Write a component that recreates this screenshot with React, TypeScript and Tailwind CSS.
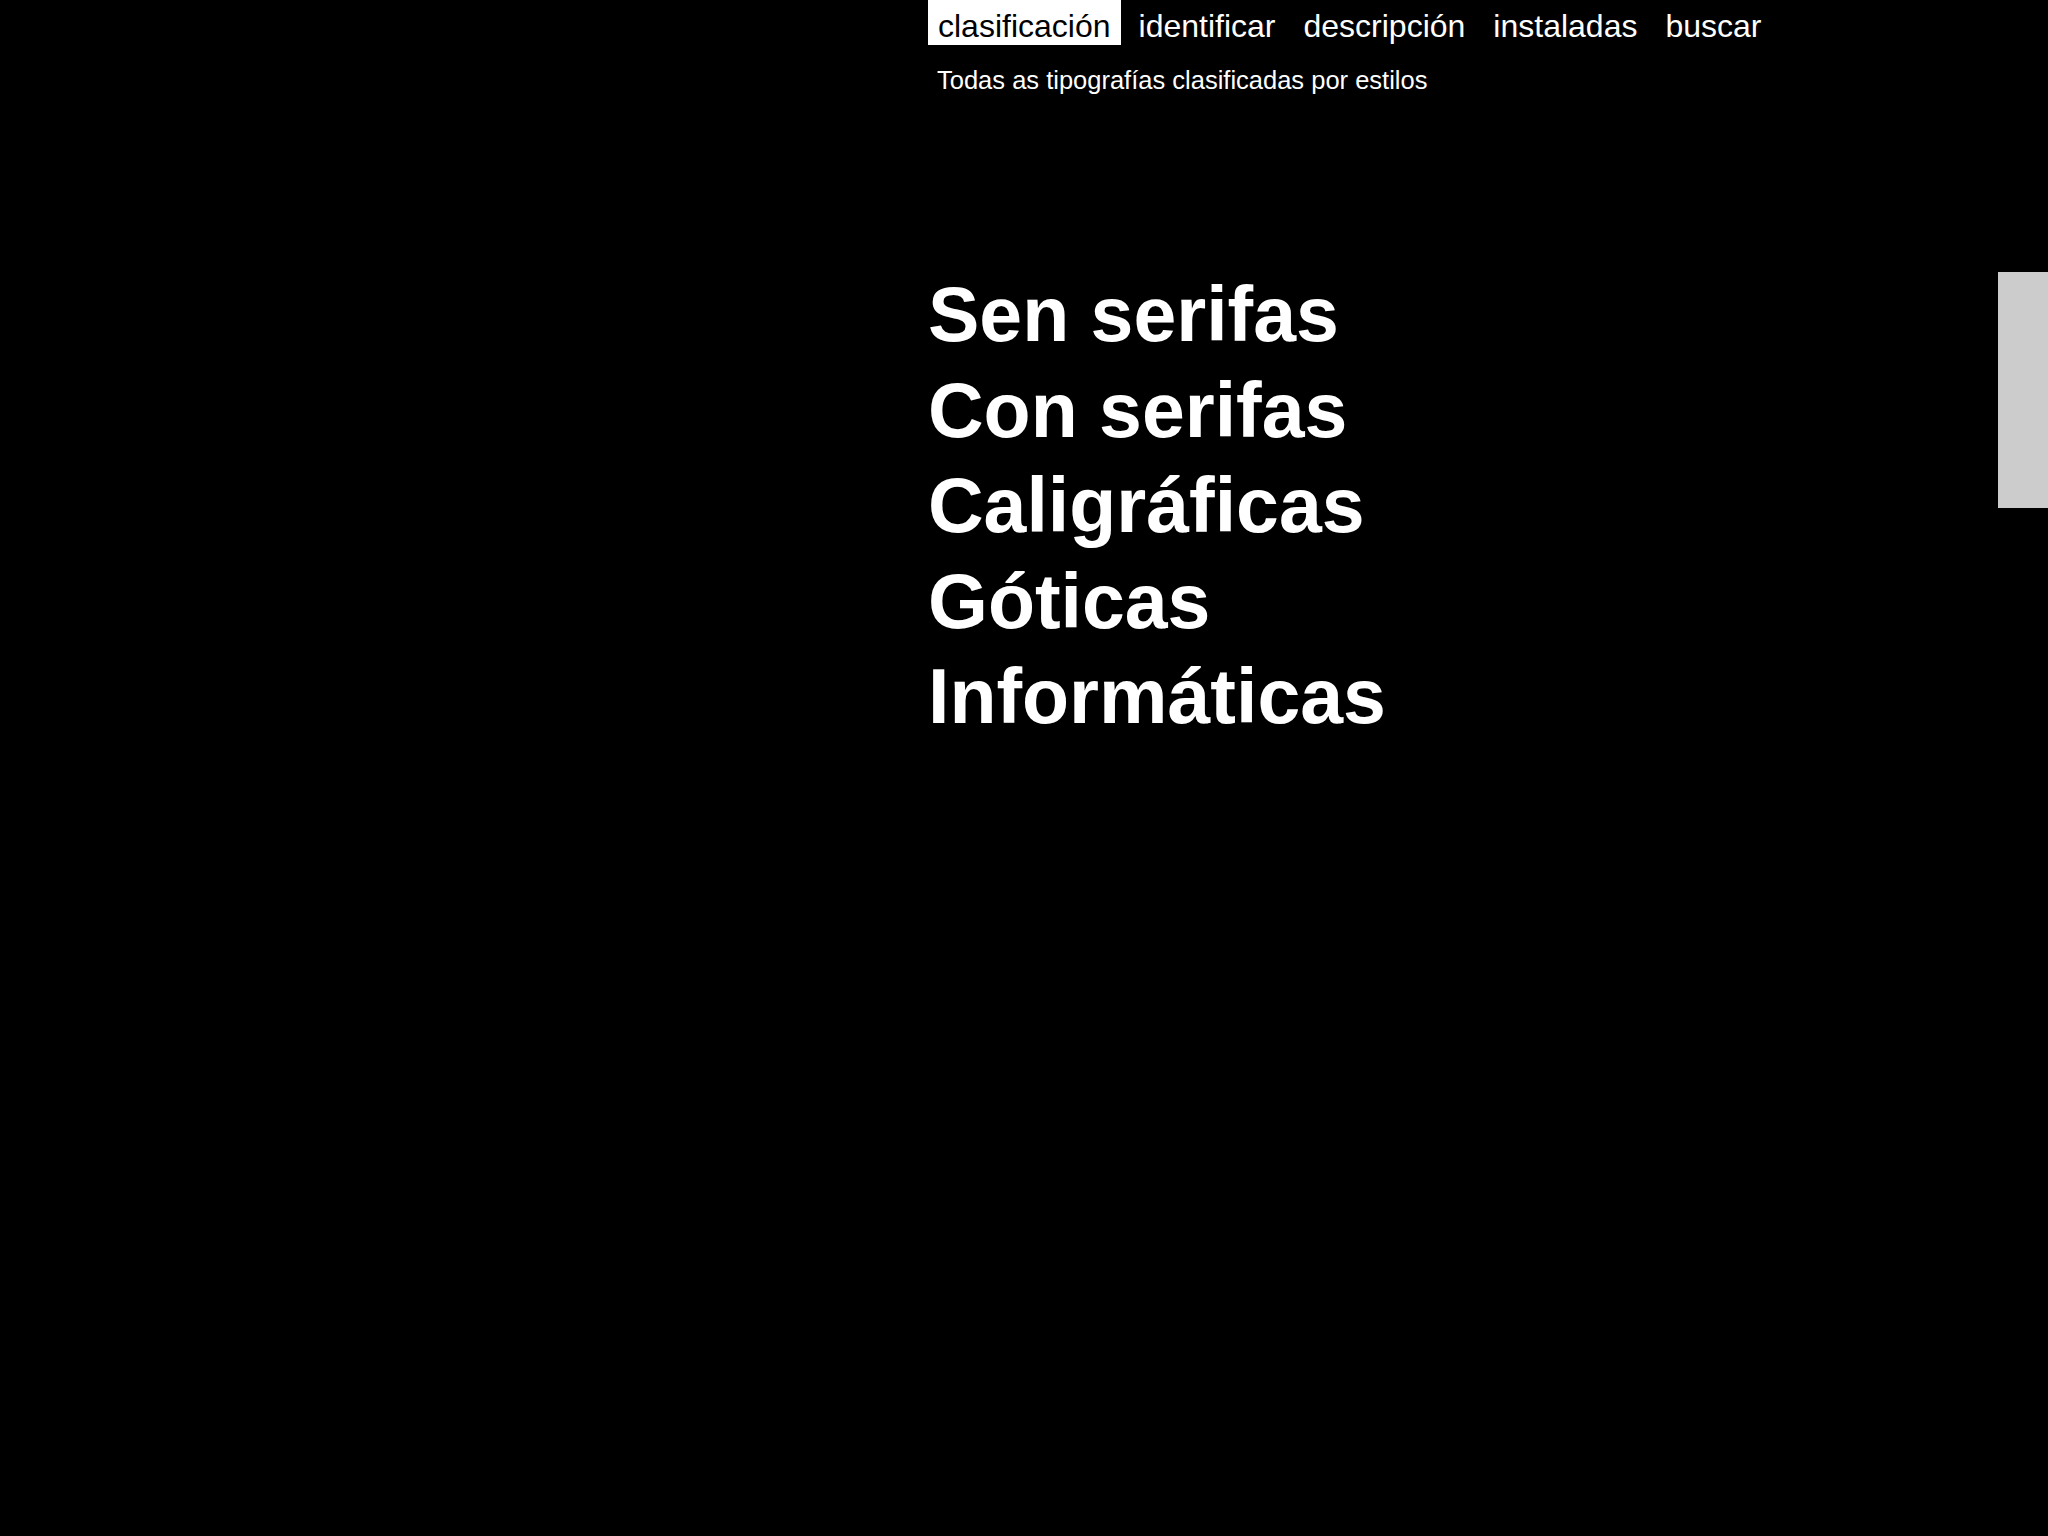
const tabs = ["clasificación", "identificar", "descripción", "instaladas", "buscar"];
const styles = ["Sen serifas", "Con serifas", "Caligráficas", "Góticas", "Informáticas"];

export default function App() {
  return (
    <div className="relative min-h-screen w-full overflow-hidden bg-black font-['Liberation_Sans',Arial,sans-serif] text-white">
      <div className="ml-[928px] flex flex-col">
        {/* menú */}
        <nav className="flex gap-[8px]">
          {tabs.map((t, i) => (
            <a
              key={t}
              className={
                i === 0
                  ? "block h-[45px] bg-white px-[10px] pt-[7px] text-[32px] leading-[38px] text-black"
                  : "block h-[45px] px-[10px] pt-[7px] text-[32px] leading-[38px] text-white"
              }
            >
              {t}
            </a>
          ))}
        </nav>
        <p className="mt-[21px] pl-[9px] text-[25.5px] leading-[29px]">
          Todas as tipografías clasificadas por estilos
        </p>

        {/* estilos */}
        <ul className="mt-[172px] flex flex-col">
          {styles.map((s) => (
            <li key={s} className="text-[77px] font-bold leading-[95.5px]">
              {s}
            </li>
          ))}
        </ul>
      </div>

      {/* pestaña lateral */}
      <div className="absolute right-0 top-[272px] h-[236px] w-[50px] bg-[#cccccc]" />
    </div>
  );
}
